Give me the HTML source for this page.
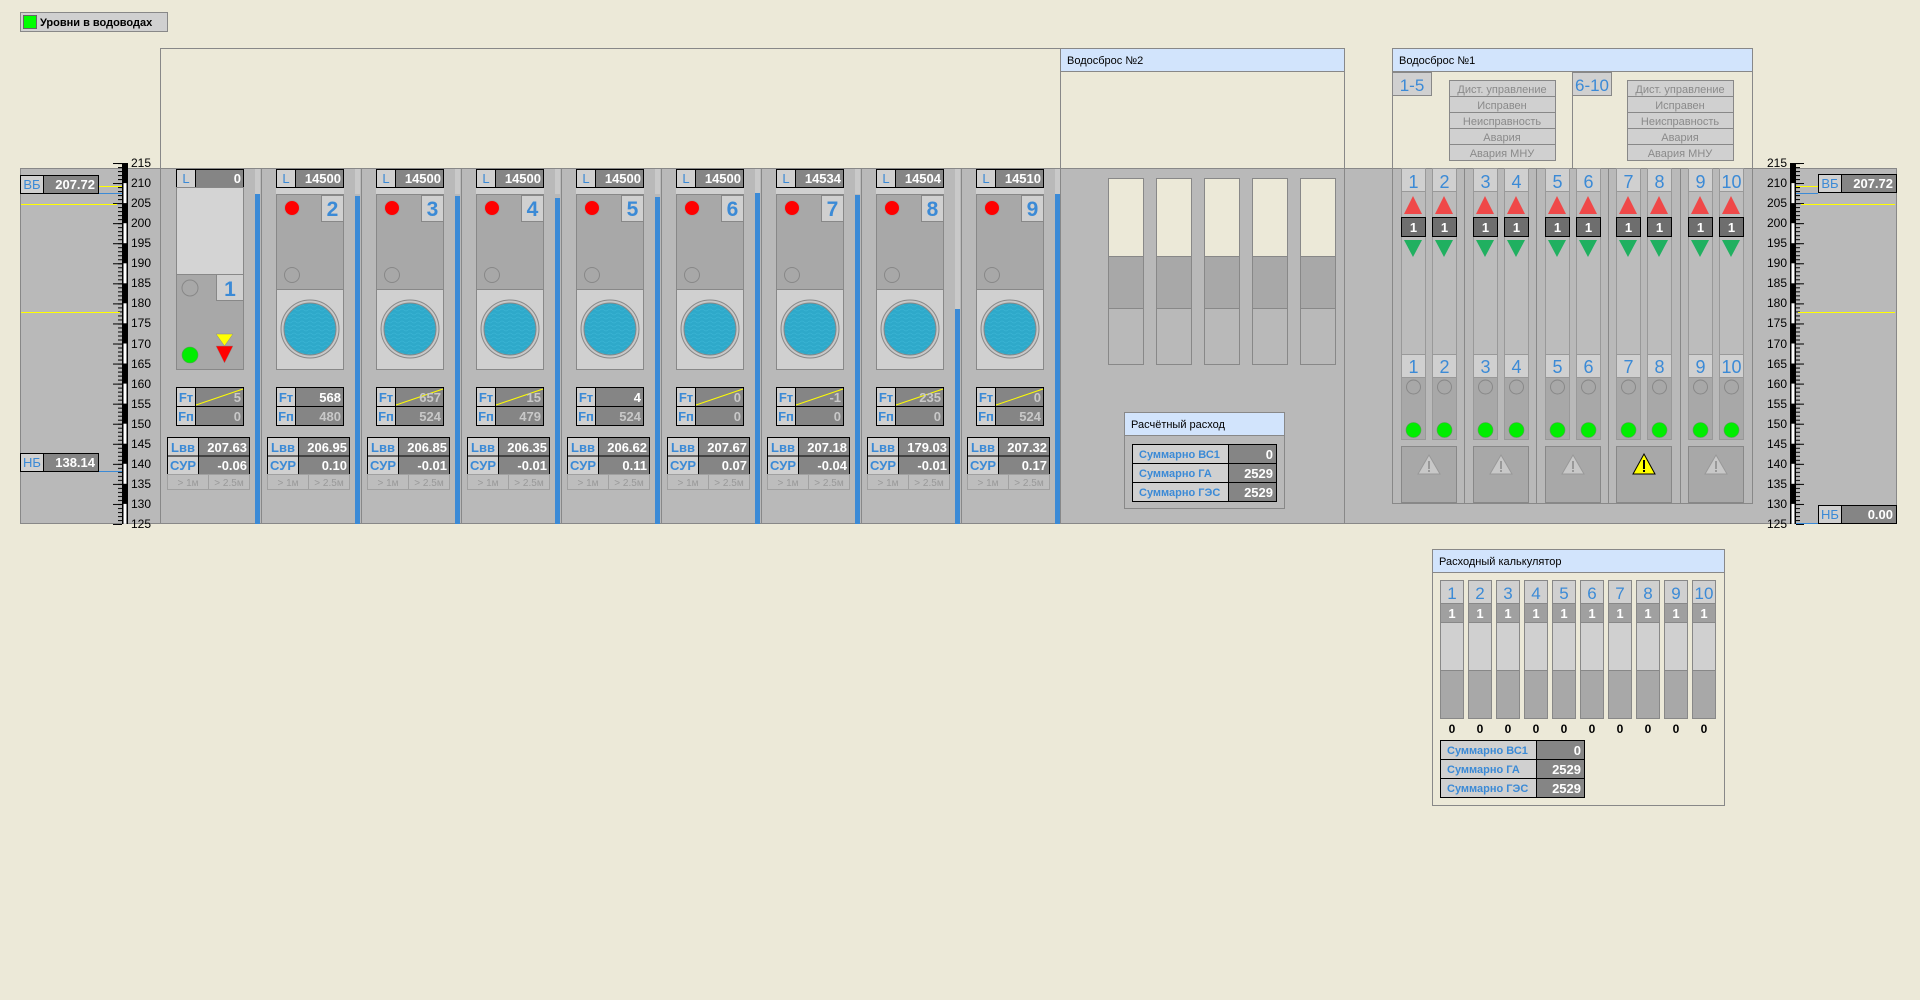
<!DOCTYPE html>
<html><head><meta charset="utf-8"><style>
html,body{margin:0;padding:0;background:#ece9d8;width:1920px;height:1000px;overflow:hidden}
svg{display:block;font-family:"Liberation Sans","DejaVu Sans",sans-serif}
.b{fill:#3b8ad6}
.w{fill:#fff;font-weight:bold}
.s11{font-size:11px}
</style></head><body>
<svg width="1920" height="1000" viewBox="0 0 1920 1000" xmlns="http://www.w3.org/2000/svg">
<defs>
<pattern id="tk" width="10" height="4.011" patternUnits="userSpaceOnUse" patternTransform="translate(0,163)"><rect x="0" y="0" width="10" height="1" fill="#000"/></pattern>
<pattern id="tk5" width="10" height="20.055" patternUnits="userSpaceOnUse" patternTransform="translate(0,163)"><rect x="0" y="0" width="10" height="1" fill="#000"/></pattern>
<pattern id="wv" width="8" height="4" patternUnits="userSpaceOnUse"><rect width="8" height="4" fill="#2ea9ca"/><path d="M0 2 Q2 0 4 2 T8 2" stroke="#3ab4d4" fill="none" stroke-width="0.8"/></pattern>
<g id="ubase">
 <rect x="0" y="187" width="68" height="7" fill="#d0d0d0"/>
 <rect x="0.5" y="169.5" width="19" height="18" fill="#d0d0d0" stroke="#000"/>
 <rect x="19.5" y="169.5" width="48" height="18" fill="#858585" stroke="#000"/>
 <rect x="0.5" y="387.5" width="19" height="19" fill="#d0d0d0" stroke="#000"/>
 <rect x="19.5" y="387.5" width="48" height="19" fill="#858585" stroke="#000"/>
 <rect x="0.5" y="406.5" width="19" height="19" fill="#d0d0d0" stroke="#000"/>
 <rect x="19.5" y="406.5" width="48" height="19" fill="#858585" stroke="#000"/>
 <rect x="-8.5" y="437.5" width="31" height="18.5" fill="#d0d0d0" stroke="#000"/>
 <rect x="22.5" y="437.5" width="51" height="18.5" fill="#858585" stroke="#000"/>
 <rect x="-8.5" y="456" width="31" height="18.5" fill="#d0d0d0" stroke="#000"/>
 <rect x="22.5" y="456" width="51" height="18.5" fill="#858585" stroke="#000"/>
 <rect x="-8.5" y="474.5" width="41" height="15" fill="#bdbdbd" stroke="#a0a0a0"/>
 <rect x="32.5" y="474.5" width="41" height="15" fill="#bdbdbd" stroke="#a0a0a0"/>
</g>
<g id="gate">
 <rect x="0.5" y="194.5" width="67" height="95" fill="#a8a8a8" stroke="#888"/>
 <rect x="45.5" y="195.5" width="22" height="26" fill="#d0d0d0" stroke="#888"/>
 <circle cx="16" cy="208" r="7.5" fill="#f00" stroke="#a0a0a0"/>
 <circle cx="16" cy="275" r="7.5" fill="none" stroke="#888"/>
 <rect x="0.5" y="289.5" width="67" height="80" fill="#d0d0d0" stroke="#888"/>
 <circle cx="34" cy="329" r="29" fill="#c8c8c8" stroke="#888"/>
 <circle cx="34" cy="329" r="26" fill="url(#wv)" stroke="#888"/>
</g>
<g id="vg">
 <rect x="0.5" y="168.5" width="24" height="271" fill="#bcbcbc" stroke="#999"/>
 <rect x="0.5" y="168.5" width="24" height="23" fill="#d0d0d0" stroke="#999"/>
 <polygon points="3,214 21,214 12,196" fill="#f04848"/>
 <rect x="0.5" y="217.5" width="24" height="19" fill="#6e6e6e" stroke="#000"/>
 <polygon points="3,240 21,240 12,257" fill="#20b060"/>
 <rect x="0.5" y="354.5" width="24" height="23" fill="#d0d0d0" stroke="#999"/>
 <rect x="0.5" y="377.5" width="24" height="62" fill="#a8a8a8" stroke="#999"/>
 <circle cx="12.5" cy="387" r="7" fill="none" stroke="#888"/>
 <circle cx="12.5" cy="430" r="7.5" fill="#00ee00" stroke="#5a9a5a" stroke-width="0.6"/>
</g>
<g id="warnbox">
 <rect x="0.5" y="446.5" width="55" height="56" fill="#a8a8a8" stroke="#888"/>
 <polygon points="28,455 39,474 17,474" fill="#c8c8c8" stroke="#999"/>
 <rect x="27" y="461" width="2" height="8" fill="#999"/><rect x="27" y="470" width="2" height="2" fill="#999"/>
</g>
<g id="calcol">
 <rect x="0.5" y="580.5" width="23" height="23" fill="#d0d0d0" stroke="#888"/>
 <rect x="0.5" y="603.5" width="23" height="19" fill="#a0a0a0" stroke="#888"/>
 <rect x="0.5" y="622.5" width="23" height="48" fill="#d0d0d0" stroke="#888"/>
 <rect x="0.5" y="670.5" width="23" height="48" fill="#a8a8a8" stroke="#888"/>
</g>
</defs>

<!-- legend -->
<rect x="20.5" y="12.5" width="147" height="19" fill="#d0d0d0" stroke="#888"/>
<rect x="23.5" y="15.5" width="13" height="13" fill="#00ff00" stroke="#666"/>
<text x="40" y="26" font-size="11" font-weight="bold" fill="#000">Уровни в водоводах</text>

<!-- top frames -->
<rect x="160.5" y="48.5" width="900" height="120" fill="none" stroke="#888"/>
<rect x="1060.5" y="48.5" width="284" height="120" fill="#ece9d8" stroke="#888"/>
<rect x="1060.5" y="48.5" width="284" height="23" fill="#d2e4fc" stroke="#888"/>
<text x="1067" y="64" class="s11" fill="#000">Водосброс №2</text>

<!-- band -->
<rect x="20.5" y="168.5" width="1876" height="355" fill="#b9b9b9" stroke="#888"/>
<line x1="160.5" y1="168" x2="160.5" y2="524" stroke="#888"/>

<!-- left scale -->
<rect x="122" y="163" width="6" height="361" fill="#000"/>
<g fill="#fff">
<rect x="123.5" y="183.1" width="3" height="20"/><rect x="123.5" y="223.2" width="3" height="20"/><rect x="123.5" y="263.3" width="3" height="20"/><rect x="123.5" y="303.3" width="3" height="20"/><rect x="123.5" y="343.5" width="3" height="20"/><rect x="123.5" y="383.6" width="3" height="20"/><rect x="123.5" y="423.7" width="3" height="20"/><rect x="123.5" y="463.8" width="3" height="20"/><rect x="123.5" y="503.9" width="3" height="20"/>
</g>
<rect x="118" y="163" width="4" height="362" fill="url(#tk)"/>
<rect x="113" y="163" width="9" height="362" fill="url(#tk5)"/>
<g font-size="12" fill="#000">
<text x="131" y="167">215</text><text x="131" y="187">210</text><text x="131" y="207">205</text><text x="131" y="227">200</text><text x="131" y="247">195</text><text x="131" y="267">190</text><text x="131" y="287">185</text><text x="131" y="307">180</text><text x="131" y="327">175</text><text x="131" y="348">170</text><text x="131" y="368">165</text><text x="131" y="388">160</text><text x="131" y="408">155</text><text x="131" y="428">150</text><text x="131" y="448">145</text><text x="131" y="468">140</text><text x="131" y="488">135</text><text x="131" y="508">130</text><text x="131" y="528">125</text>
</g>
<line x1="98" y1="186.5" x2="122" y2="186.5" stroke="#ff0" />
<line x1="98" y1="193.5" x2="122" y2="193.5" stroke="#3b8ad6"/>
<line x1="21" y1="204.5" x2="117" y2="204.5" stroke="#ff0"/>
<line x1="21" y1="312.5" x2="120" y2="312.5" stroke="#ff0"/>
<line x1="98" y1="471.5" x2="122" y2="471.5" stroke="#3b8ad6"/>
<rect x="20.5" y="175.5" width="23" height="18" fill="#d0d0d0" stroke="#000"/>
<rect x="43.5" y="175.5" width="55" height="18" fill="#858585" stroke="#000"/>
<text x="32" y="189" text-anchor="middle" font-size="13" class="b">ВБ</text>
<text x="95" y="189" text-anchor="end" font-size="13" class="w">207.72</text>
<rect x="20.5" y="453.5" width="23" height="18" fill="#d0d0d0" stroke="#000"/>
<rect x="43.5" y="453.5" width="55" height="18" fill="#858585" stroke="#000"/>
<text x="32" y="467" text-anchor="middle" font-size="13" class="b">НБ</text>
<text x="95" y="467" text-anchor="end" font-size="13" class="w">138.14</text>

<!-- unit separators & blue bars -->
<g fill="#c9c9c9">
<rect x="255" y="169" width="5" height="25"/><rect x="355" y="169" width="5" height="25"/><rect x="455" y="169" width="5" height="25"/><rect x="555" y="169" width="5" height="25"/><rect x="655" y="169" width="5" height="25"/><rect x="755" y="169" width="5" height="25"/><rect x="855" y="169" width="5" height="25"/><rect x="955" y="169" width="5" height="140"/><rect x="1055" y="169" width="5" height="25"/>
</g>
<g fill="#3b8ad6">
<rect x="255" y="194" width="5" height="330"/><rect x="355" y="196" width="5" height="328"/><rect x="455" y="196" width="5" height="328"/><rect x="555" y="198" width="5" height="326"/><rect x="655" y="197" width="5" height="327"/><rect x="755" y="193" width="5" height="331"/><rect x="855" y="195" width="5" height="329"/><rect x="955" y="309" width="5" height="215"/><rect x="1055" y="194" width="5" height="330"/>
</g>
<g stroke="#888">
<line x1="261.5" y1="168" x2="261.5" y2="524"/><line x1="361.5" y1="168" x2="361.5" y2="524"/><line x1="461.5" y1="168" x2="461.5" y2="524"/><line x1="561.5" y1="168" x2="561.5" y2="524"/><line x1="661.5" y1="168" x2="661.5" y2="524"/><line x1="761.5" y1="168" x2="761.5" y2="524"/><line x1="861.5" y1="168" x2="861.5" y2="524"/><line x1="961.5" y1="168" x2="961.5" y2="524"/><line x1="1060.5" y1="168" x2="1060.5" y2="524"/><line x1="1344.5" y1="168" x2="1344.5" y2="524"/>
</g>

<!-- unit 1 -->
<g transform="translate(176,0)">
<use href="#ubase"/>
<rect x="0.5" y="187.5" width="67" height="87" fill="#d4d4d4" stroke="#888"/>
<rect x="0.5" y="274.5" width="67" height="95" fill="#a8a8a8" stroke="#888"/>
<rect x="40.5" y="274.5" width="27" height="26" fill="#d0d0d0" stroke="#888"/>
<circle cx="14" cy="288" r="8" fill="none" stroke="#888"/>
<circle cx="14" cy="355" r="8" fill="#00ee00" stroke="#5a9a5a" stroke-width="0.6"/>
<polygon points="40,334 57,334 48.5,346" fill="#ff0" stroke="#888" stroke-width="0.5"/>
<polygon points="40,346 57,346 48.5,363" fill="#f00" stroke="#888" stroke-width="0.5"/>
<text x="54" y="296" text-anchor="middle" font-size="21" font-weight="bold" class="b">1</text>
<text x="10" y="183" text-anchor="middle" font-size="13" class="b">L</text><text x="65" y="183" text-anchor="end" font-size="13" class="w">0</text>
<line x1="20" y1="405" x2="67" y2="389" stroke="#ff0"/>
<text x="10" y="402" text-anchor="middle" font-size="13" font-weight="bold" class="b">Fт</text><text x="65" y="402" text-anchor="end" font-size="13" fill="#c8c8c8" font-weight="bold">5</text>
<text x="10" y="421" text-anchor="middle" font-size="13" font-weight="bold" class="b">Fп</text><text x="65" y="421" text-anchor="end" font-size="13" fill="#c8c8c8" font-weight="bold">0</text>
<text x="7" y="452" text-anchor="middle" font-size="13" font-weight="bold" class="b">Lвв</text><text x="71" y="452" text-anchor="end" font-size="13" class="w">207.63</text>
<text x="7" y="470" text-anchor="middle" font-size="13" font-weight="bold" class="b">СУР</text><text x="71" y="470" text-anchor="end" font-size="13" class="w">-0.06</text>
<text x="12" y="486" text-anchor="middle" font-size="10" fill="#999">&gt; 1м</text><text x="53" y="486" text-anchor="middle" font-size="10" fill="#999">&gt; 2.5м</text>
</g>

<!-- units 2..9 -->
<g transform="translate(276,0)"><use href="#ubase"/><use href="#gate"/>
<text x="56.5" y="216" text-anchor="middle" font-size="21" font-weight="bold" class="b">2</text>
<text x="10" y="183" text-anchor="middle" font-size="13" class="b">L</text><text x="65" y="183" text-anchor="end" font-size="13" class="w">14500</text>
<text x="10" y="402" text-anchor="middle" font-size="13" font-weight="bold" class="b">Fт</text><text x="65" y="402" text-anchor="end" font-size="13" class="w">568</text>
<text x="10" y="421" text-anchor="middle" font-size="13" font-weight="bold" class="b">Fп</text><text x="65" y="421" text-anchor="end" font-size="13" fill="#c8c8c8" font-weight="bold">480</text>
<text x="7" y="452" text-anchor="middle" font-size="13" font-weight="bold" class="b">Lвв</text><text x="71" y="452" text-anchor="end" font-size="13" class="w">206.95</text>
<text x="7" y="470" text-anchor="middle" font-size="13" font-weight="bold" class="b">СУР</text><text x="71" y="470" text-anchor="end" font-size="13" class="w">0.10</text>
<text x="12" y="486" text-anchor="middle" font-size="10" fill="#999">&gt; 1м</text><text x="53" y="486" text-anchor="middle" font-size="10" fill="#999">&gt; 2.5м</text>
</g>
<g transform="translate(376,0)"><use href="#ubase"/><use href="#gate"/>
<text x="56.5" y="216" text-anchor="middle" font-size="21" font-weight="bold" class="b">3</text>
<text x="10" y="183" text-anchor="middle" font-size="13" class="b">L</text><text x="65" y="183" text-anchor="end" font-size="13" class="w">14500</text>
<line x1="20" y1="405" x2="67" y2="389" stroke="#ff0"/>
<text x="10" y="402" text-anchor="middle" font-size="13" font-weight="bold" class="b">Fт</text><text x="65" y="402" text-anchor="end" font-size="13" fill="#c8c8c8" font-weight="bold">657</text>
<text x="10" y="421" text-anchor="middle" font-size="13" font-weight="bold" class="b">Fп</text><text x="65" y="421" text-anchor="end" font-size="13" fill="#c8c8c8" font-weight="bold">524</text>
<text x="7" y="452" text-anchor="middle" font-size="13" font-weight="bold" class="b">Lвв</text><text x="71" y="452" text-anchor="end" font-size="13" class="w">206.85</text>
<text x="7" y="470" text-anchor="middle" font-size="13" font-weight="bold" class="b">СУР</text><text x="71" y="470" text-anchor="end" font-size="13" class="w">-0.01</text>
<text x="12" y="486" text-anchor="middle" font-size="10" fill="#999">&gt; 1м</text><text x="53" y="486" text-anchor="middle" font-size="10" fill="#999">&gt; 2.5м</text>
</g>
<g transform="translate(476,0)"><use href="#ubase"/><use href="#gate"/>
<text x="56.5" y="216" text-anchor="middle" font-size="21" font-weight="bold" class="b">4</text>
<text x="10" y="183" text-anchor="middle" font-size="13" class="b">L</text><text x="65" y="183" text-anchor="end" font-size="13" class="w">14500</text>
<line x1="20" y1="405" x2="67" y2="389" stroke="#ff0"/>
<text x="10" y="402" text-anchor="middle" font-size="13" font-weight="bold" class="b">Fт</text><text x="65" y="402" text-anchor="end" font-size="13" fill="#c8c8c8" font-weight="bold">15</text>
<text x="10" y="421" text-anchor="middle" font-size="13" font-weight="bold" class="b">Fп</text><text x="65" y="421" text-anchor="end" font-size="13" fill="#c8c8c8" font-weight="bold">479</text>
<text x="7" y="452" text-anchor="middle" font-size="13" font-weight="bold" class="b">Lвв</text><text x="71" y="452" text-anchor="end" font-size="13" class="w">206.35</text>
<text x="7" y="470" text-anchor="middle" font-size="13" font-weight="bold" class="b">СУР</text><text x="71" y="470" text-anchor="end" font-size="13" class="w">-0.01</text>
<text x="12" y="486" text-anchor="middle" font-size="10" fill="#999">&gt; 1м</text><text x="53" y="486" text-anchor="middle" font-size="10" fill="#999">&gt; 2.5м</text>
</g>
<g transform="translate(576,0)"><use href="#ubase"/><use href="#gate"/>
<text x="56.5" y="216" text-anchor="middle" font-size="21" font-weight="bold" class="b">5</text>
<text x="10" y="183" text-anchor="middle" font-size="13" class="b">L</text><text x="65" y="183" text-anchor="end" font-size="13" class="w">14500</text>
<text x="10" y="402" text-anchor="middle" font-size="13" font-weight="bold" class="b">Fт</text><text x="65" y="402" text-anchor="end" font-size="13" class="w">4</text>
<text x="10" y="421" text-anchor="middle" font-size="13" font-weight="bold" class="b">Fп</text><text x="65" y="421" text-anchor="end" font-size="13" fill="#c8c8c8" font-weight="bold">524</text>
<text x="7" y="452" text-anchor="middle" font-size="13" font-weight="bold" class="b">Lвв</text><text x="71" y="452" text-anchor="end" font-size="13" class="w">206.62</text>
<text x="7" y="470" text-anchor="middle" font-size="13" font-weight="bold" class="b">СУР</text><text x="71" y="470" text-anchor="end" font-size="13" class="w">0.11</text>
<text x="12" y="486" text-anchor="middle" font-size="10" fill="#999">&gt; 1м</text><text x="53" y="486" text-anchor="middle" font-size="10" fill="#999">&gt; 2.5м</text>
</g>
<g transform="translate(676,0)"><use href="#ubase"/><use href="#gate"/>
<text x="56.5" y="216" text-anchor="middle" font-size="21" font-weight="bold" class="b">6</text>
<text x="10" y="183" text-anchor="middle" font-size="13" class="b">L</text><text x="65" y="183" text-anchor="end" font-size="13" class="w">14500</text>
<line x1="20" y1="405" x2="67" y2="389" stroke="#ff0"/>
<text x="10" y="402" text-anchor="middle" font-size="13" font-weight="bold" class="b">Fт</text><text x="65" y="402" text-anchor="end" font-size="13" fill="#c8c8c8" font-weight="bold">0</text>
<text x="10" y="421" text-anchor="middle" font-size="13" font-weight="bold" class="b">Fп</text><text x="65" y="421" text-anchor="end" font-size="13" fill="#c8c8c8" font-weight="bold">0</text>
<text x="7" y="452" text-anchor="middle" font-size="13" font-weight="bold" class="b">Lвв</text><text x="71" y="452" text-anchor="end" font-size="13" class="w">207.67</text>
<text x="7" y="470" text-anchor="middle" font-size="13" font-weight="bold" class="b">СУР</text><text x="71" y="470" text-anchor="end" font-size="13" class="w">0.07</text>
<text x="12" y="486" text-anchor="middle" font-size="10" fill="#999">&gt; 1м</text><text x="53" y="486" text-anchor="middle" font-size="10" fill="#999">&gt; 2.5м</text>
</g>
<g transform="translate(776,0)"><use href="#ubase"/><use href="#gate"/>
<text x="56.5" y="216" text-anchor="middle" font-size="21" font-weight="bold" class="b">7</text>
<text x="10" y="183" text-anchor="middle" font-size="13" class="b">L</text><text x="65" y="183" text-anchor="end" font-size="13" class="w">14534</text>
<line x1="20" y1="405" x2="67" y2="389" stroke="#ff0"/>
<text x="10" y="402" text-anchor="middle" font-size="13" font-weight="bold" class="b">Fт</text><text x="65" y="402" text-anchor="end" font-size="13" fill="#c8c8c8" font-weight="bold">-1</text>
<text x="10" y="421" text-anchor="middle" font-size="13" font-weight="bold" class="b">Fп</text><text x="65" y="421" text-anchor="end" font-size="13" fill="#c8c8c8" font-weight="bold">0</text>
<text x="7" y="452" text-anchor="middle" font-size="13" font-weight="bold" class="b">Lвв</text><text x="71" y="452" text-anchor="end" font-size="13" class="w">207.18</text>
<text x="7" y="470" text-anchor="middle" font-size="13" font-weight="bold" class="b">СУР</text><text x="71" y="470" text-anchor="end" font-size="13" class="w">-0.04</text>
<text x="12" y="486" text-anchor="middle" font-size="10" fill="#999">&gt; 1м</text><text x="53" y="486" text-anchor="middle" font-size="10" fill="#999">&gt; 2.5м</text>
</g>
<g transform="translate(876,0)"><use href="#ubase"/><use href="#gate"/>
<text x="56.5" y="216" text-anchor="middle" font-size="21" font-weight="bold" class="b">8</text>
<text x="10" y="183" text-anchor="middle" font-size="13" class="b">L</text><text x="65" y="183" text-anchor="end" font-size="13" class="w">14504</text>
<line x1="20" y1="405" x2="67" y2="389" stroke="#ff0"/>
<text x="10" y="402" text-anchor="middle" font-size="13" font-weight="bold" class="b">Fт</text><text x="65" y="402" text-anchor="end" font-size="13" fill="#c8c8c8" font-weight="bold">235</text>
<text x="10" y="421" text-anchor="middle" font-size="13" font-weight="bold" class="b">Fп</text><text x="65" y="421" text-anchor="end" font-size="13" fill="#c8c8c8" font-weight="bold">0</text>
<text x="7" y="452" text-anchor="middle" font-size="13" font-weight="bold" class="b">Lвв</text><text x="71" y="452" text-anchor="end" font-size="13" class="w">179.03</text>
<text x="7" y="470" text-anchor="middle" font-size="13" font-weight="bold" class="b">СУР</text><text x="71" y="470" text-anchor="end" font-size="13" class="w">-0.01</text>
<text x="12" y="486" text-anchor="middle" font-size="10" fill="#999">&gt; 1м</text><text x="53" y="486" text-anchor="middle" font-size="10" fill="#999">&gt; 2.5м</text>
</g>
<g transform="translate(976,0)"><use href="#ubase"/><use href="#gate"/>
<text x="56.5" y="216" text-anchor="middle" font-size="21" font-weight="bold" class="b">9</text>
<text x="10" y="183" text-anchor="middle" font-size="13" class="b">L</text><text x="65" y="183" text-anchor="end" font-size="13" class="w">14510</text>
<line x1="20" y1="405" x2="67" y2="389" stroke="#ff0"/>
<text x="10" y="402" text-anchor="middle" font-size="13" font-weight="bold" class="b">Fт</text><text x="65" y="402" text-anchor="end" font-size="13" fill="#c8c8c8" font-weight="bold">0</text>
<text x="10" y="421" text-anchor="middle" font-size="13" font-weight="bold" class="b">Fп</text><text x="65" y="421" text-anchor="end" font-size="13" fill="#c8c8c8" font-weight="bold">524</text>
<text x="7" y="452" text-anchor="middle" font-size="13" font-weight="bold" class="b">Lвв</text><text x="71" y="452" text-anchor="end" font-size="13" class="w">207.32</text>
<text x="7" y="470" text-anchor="middle" font-size="13" font-weight="bold" class="b">СУР</text><text x="71" y="470" text-anchor="end" font-size="13" class="w">0.17</text>
<text x="12" y="486" text-anchor="middle" font-size="10" fill="#999">&gt; 1м</text><text x="53" y="486" text-anchor="middle" font-size="10" fill="#999">&gt; 2.5м</text>
</g>

<!-- vodosbros 2 bars -->
<g stroke="#888">
<rect x="1108.5" y="178.5" width="35" height="78" fill="#ece9d8"/><rect x="1108.5" y="256.5" width="35" height="52" fill="#a8a8a8"/><rect x="1108.5" y="308.5" width="35" height="56" fill="#b9b9b9"/>
<rect x="1156.5" y="178.5" width="35" height="78" fill="#ece9d8"/><rect x="1156.5" y="256.5" width="35" height="52" fill="#a8a8a8"/><rect x="1156.5" y="308.5" width="35" height="56" fill="#b9b9b9"/>
<rect x="1204.5" y="178.5" width="35" height="78" fill="#ece9d8"/><rect x="1204.5" y="256.5" width="35" height="52" fill="#a8a8a8"/><rect x="1204.5" y="308.5" width="35" height="56" fill="#b9b9b9"/>
<rect x="1252.5" y="178.5" width="35" height="78" fill="#ece9d8"/><rect x="1252.5" y="256.5" width="35" height="52" fill="#a8a8a8"/><rect x="1252.5" y="308.5" width="35" height="56" fill="#b9b9b9"/>
<rect x="1300.5" y="178.5" width="35" height="78" fill="#ece9d8"/><rect x="1300.5" y="256.5" width="35" height="52" fill="#a8a8a8"/><rect x="1300.5" y="308.5" width="35" height="56" fill="#b9b9b9"/>
</g>
<!-- расчётный расход -->
<rect x="1124.5" y="412.5" width="160" height="96" fill="#b9b9b9" stroke="#888"/>
<rect x="1124.5" y="412.5" width="160" height="23" fill="#d2e4fc" stroke="#888"/>
<text x="1131" y="428" class="s11" fill="#000">Расчётный расход</text>
<g stroke="#000">
<rect x="1132.5" y="444.5" width="96" height="19" fill="#d0d0d0"/><rect x="1228.5" y="444.5" width="48" height="19" fill="#858585"/>
<rect x="1132.5" y="463.5" width="96" height="19" fill="#d0d0d0"/><rect x="1228.5" y="463.5" width="48" height="19" fill="#858585"/>
<rect x="1132.5" y="482.5" width="96" height="19" fill="#d0d0d0"/><rect x="1228.5" y="482.5" width="48" height="19" fill="#858585"/>
</g>
<g font-size="11" font-weight="bold" class="b"><text x="1139" y="458">Суммарно ВС1</text><text x="1139" y="477">Суммарно ГА</text><text x="1139" y="496">Суммарно ГЭС</text></g>
<g font-size="13" class="w" text-anchor="end"><text x="1273" y="459">0</text><text x="1273" y="478">2529</text><text x="1273" y="497">2529</text></g>

<!-- vodosbros 1 -->
<rect x="1392.5" y="48.5" width="360" height="455" fill="none" stroke="#888"/>
<rect x="1392.5" y="168.5" width="360" height="335" fill="#b9b9b9" stroke="#888"/>
<rect x="1392.5" y="48.5" width="360" height="23" fill="#d2e4fc" stroke="#888"/>
<text x="1399" y="64" class="s11" fill="#000">Водосброс №1</text>
<line x1="1572.5" y1="72" x2="1572.5" y2="168" stroke="#888"/>
<rect x="1392.5" y="72.5" width="39" height="23" fill="#d0d0d0" stroke="#888"/>
<text x="1412" y="91" text-anchor="middle" font-size="17" class="b">1-5</text>
<rect x="1572.5" y="72.5" width="39" height="23" fill="#d0d0d0" stroke="#888"/>
<text x="1592" y="91" text-anchor="middle" font-size="17" class="b">6-10</text>
<g stroke="#888" fill="#d0d0d0">
<rect x="1449.5" y="80.5" width="106" height="16"/><rect x="1449.5" y="96.5" width="106" height="16"/><rect x="1449.5" y="112.5" width="106" height="16"/><rect x="1449.5" y="128.5" width="106" height="16"/><rect x="1449.5" y="144.5" width="106" height="16"/>
<rect x="1627.5" y="80.5" width="106" height="16"/><rect x="1627.5" y="96.5" width="106" height="16"/><rect x="1627.5" y="112.5" width="106" height="16"/><rect x="1627.5" y="128.5" width="106" height="16"/><rect x="1627.5" y="144.5" width="106" height="16"/>
</g>
<g font-size="11" fill="#8a8a8a" text-anchor="middle">
<text x="1502" y="93">Дист. управление</text><text x="1502" y="109">Исправен</text><text x="1502" y="125">Неисправность</text><text x="1502" y="141">Авария</text><text x="1502" y="157">Авария МНУ</text>
<text x="1680" y="93">Дист. управление</text><text x="1680" y="109">Исправен</text><text x="1680" y="125">Неисправность</text><text x="1680" y="141">Авария</text><text x="1680" y="157">Авария МНУ</text>
</g>
<g stroke="#888"><line x1="1464.5" y1="168" x2="1464.5" y2="503"/><line x1="1536.5" y1="168" x2="1536.5" y2="503"/><line x1="1608.5" y1="168" x2="1608.5" y2="503"/><line x1="1680.5" y1="168" x2="1680.5" y2="503"/></g>
<use href="#vg" x="1401"/><use href="#vg" x="1432"/><use href="#vg" x="1473"/><use href="#vg" x="1504"/><use href="#vg" x="1545"/><use href="#vg" x="1576"/><use href="#vg" x="1616"/><use href="#vg" x="1647"/><use href="#vg" x="1688"/><use href="#vg" x="1719"/>
<g font-size="18" class="b" text-anchor="middle">
<text x="1413.5" y="188">1</text><text x="1444.5" y="188">2</text><text x="1485.5" y="188">3</text><text x="1516.5" y="188">4</text><text x="1557.5" y="188">5</text><text x="1588.5" y="188">6</text><text x="1628.5" y="188">7</text><text x="1659.5" y="188">8</text><text x="1700.5" y="188">9</text><text x="1731.5" y="188">10</text>
<text x="1413.5" y="373">1</text><text x="1444.5" y="373">2</text><text x="1485.5" y="373">3</text><text x="1516.5" y="373">4</text><text x="1557.5" y="373">5</text><text x="1588.5" y="373">6</text><text x="1628.5" y="373">7</text><text x="1659.5" y="373">8</text><text x="1700.5" y="373">9</text><text x="1731.5" y="373">10</text>
</g>
<g font-size="13" class="w" text-anchor="middle">
<text x="1413.5" y="232">1</text><text x="1444.5" y="232">1</text><text x="1485.5" y="232">1</text><text x="1516.5" y="232">1</text><text x="1557.5" y="232">1</text><text x="1588.5" y="232">1</text><text x="1628.5" y="232">1</text><text x="1659.5" y="232">1</text><text x="1700.5" y="232">1</text><text x="1731.5" y="232">1</text>
</g>
<use href="#warnbox" x="1401"/><use href="#warnbox" x="1473"/><use href="#warnbox" x="1545"/><use href="#warnbox" x="1688"/>
<g transform="translate(1616,0)">
<rect x="0.5" y="446.5" width="55" height="56" fill="#a8a8a8" stroke="#888"/>
<polygon points="28,454 39,474 17,474" fill="#ff0" stroke="#000"/>
<rect x="27" y="460" width="2" height="9" fill="#000"/><rect x="27" y="470" width="2" height="2" fill="#000"/>
</g>

<!-- right scale -->
<rect x="1790" y="163" width="6" height="361" fill="#000"/>
<g fill="#fff">
<rect x="1791.5" y="183.1" width="3" height="20"/><rect x="1791.5" y="223.2" width="3" height="20"/><rect x="1791.5" y="263.3" width="3" height="20"/><rect x="1791.5" y="303.3" width="3" height="20"/><rect x="1791.5" y="343.5" width="3" height="20"/><rect x="1791.5" y="383.6" width="3" height="20"/><rect x="1791.5" y="423.7" width="3" height="20"/><rect x="1791.5" y="463.8" width="3" height="20"/><rect x="1791.5" y="503.9" width="3" height="20"/>
</g>
<rect x="1796" y="163" width="4" height="362" fill="url(#tk)"/>
<rect x="1796" y="163" width="8" height="362" fill="url(#tk5)"/>
<g font-size="12" fill="#000" text-anchor="end">
<text x="1787" y="167">215</text><text x="1787" y="187">210</text><text x="1787" y="207">205</text><text x="1787" y="227">200</text><text x="1787" y="247">195</text><text x="1787" y="267">190</text><text x="1787" y="287">185</text><text x="1787" y="307">180</text><text x="1787" y="327">175</text><text x="1787" y="348">170</text><text x="1787" y="368">165</text><text x="1787" y="388">160</text><text x="1787" y="408">155</text><text x="1787" y="428">150</text><text x="1787" y="448">145</text><text x="1787" y="468">140</text><text x="1787" y="488">135</text><text x="1787" y="508">130</text><text x="1787" y="528">125</text>
</g>
<line x1="1796" y1="186.5" x2="1818" y2="186.5" stroke="#ff0"/>
<line x1="1796" y1="193.5" x2="1818" y2="193.5" stroke="#3b8ad6"/>
<line x1="1801" y1="204.5" x2="1895" y2="204.5" stroke="#ff0"/>
<line x1="1798" y1="312.5" x2="1895" y2="312.5" stroke="#ff0"/>
<line x1="1796" y1="523.5" x2="1818" y2="523.5" stroke="#3b8ad6"/>
<rect x="1818.5" y="174.5" width="23" height="18" fill="#d0d0d0" stroke="#000"/>
<rect x="1841.5" y="174.5" width="55" height="18" fill="#858585" stroke="#000"/>
<text x="1830" y="188" text-anchor="middle" font-size="13" class="b">ВБ</text>
<text x="1893" y="188" text-anchor="end" font-size="13" class="w">207.72</text>
<rect x="1818.5" y="505.5" width="23" height="18" fill="#d0d0d0" stroke="#000"/>
<rect x="1841.5" y="505.5" width="55" height="18" fill="#858585" stroke="#000"/>
<text x="1830" y="519" text-anchor="middle" font-size="13" class="b">НБ</text>
<text x="1893" y="519" text-anchor="end" font-size="13" class="w">0.00</text>

<!-- calculator -->
<rect x="1432.5" y="549.5" width="292" height="256" fill="#ece9d8" stroke="#888"/>
<rect x="1432.5" y="549.5" width="292" height="23" fill="#d2e4fc" stroke="#888"/>
<text x="1439" y="565" class="s11" fill="#000">Расходный калькулятор</text>
<use href="#calcol" x="1440"/><use href="#calcol" x="1468"/><use href="#calcol" x="1496"/><use href="#calcol" x="1524"/><use href="#calcol" x="1552"/><use href="#calcol" x="1580"/><use href="#calcol" x="1608"/><use href="#calcol" x="1636"/><use href="#calcol" x="1664"/><use href="#calcol" x="1692"/>
<g font-size="17" class="b" text-anchor="middle">
<text x="1452" y="599">1</text><text x="1480" y="599">2</text><text x="1508" y="599">3</text><text x="1536" y="599">4</text><text x="1564" y="599">5</text><text x="1592" y="599">6</text><text x="1620" y="599">7</text><text x="1648" y="599">8</text><text x="1676" y="599">9</text><text x="1704" y="599">10</text>
</g>
<g font-size="13" class="w" text-anchor="middle">
<text x="1452" y="618">1</text><text x="1480" y="618">1</text><text x="1508" y="618">1</text><text x="1536" y="618">1</text><text x="1564" y="618">1</text><text x="1592" y="618">1</text><text x="1620" y="618">1</text><text x="1648" y="618">1</text><text x="1676" y="618">1</text><text x="1704" y="618">1</text>
</g>
<g font-size="12" font-weight="bold" fill="#000" text-anchor="middle">
<text x="1452" y="733">0</text><text x="1480" y="733">0</text><text x="1508" y="733">0</text><text x="1536" y="733">0</text><text x="1564" y="733">0</text><text x="1592" y="733">0</text><text x="1620" y="733">0</text><text x="1648" y="733">0</text><text x="1676" y="733">0</text><text x="1704" y="733">0</text>
</g>
<g stroke="#000">
<rect x="1440.5" y="740.5" width="96" height="19" fill="#d0d0d0"/><rect x="1536.5" y="740.5" width="48" height="19" fill="#858585"/>
<rect x="1440.5" y="759.5" width="96" height="19" fill="#d0d0d0"/><rect x="1536.5" y="759.5" width="48" height="19" fill="#858585"/>
<rect x="1440.5" y="778.5" width="96" height="19" fill="#d0d0d0"/><rect x="1536.5" y="778.5" width="48" height="19" fill="#858585"/>
</g>
<g font-size="11" font-weight="bold" class="b"><text x="1447" y="754">Суммарно ВС1</text><text x="1447" y="773">Суммарно ГА</text><text x="1447" y="792">Суммарно ГЭС</text></g>
<g font-size="13" class="w" text-anchor="end"><text x="1581" y="755">0</text><text x="1581" y="774">2529</text><text x="1581" y="793">2529</text></g>
</svg>
</body></html>
